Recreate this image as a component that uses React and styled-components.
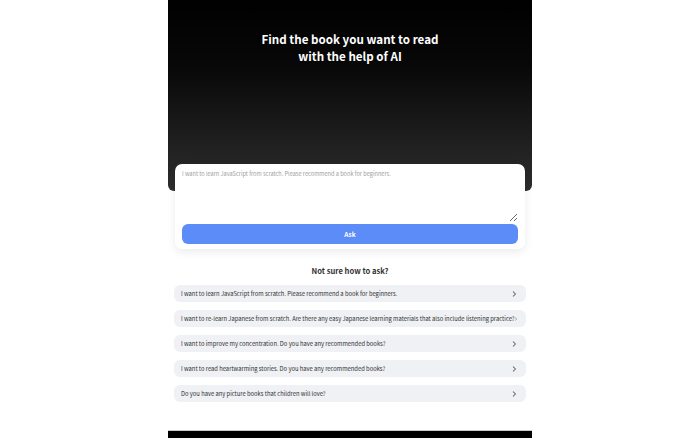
import React from "react";
import styled, { createGlobalStyle } from "styled-components";

const suggestions = [
  "I want to learn JavaScript from scratch. Please recommend a book for beginners.",
  "I want to re-learn Japanese from scratch. Are there any easy Japanese learning materials that also include listening practice?",
  "I want to improve my concentration. Do you have any recommended books?",
  "I want to read heartwarming stories. Do you have any recommended books?",
  "Do you have any picture books that children will love?",
];

const Chevron = () => (
  <svg width="5" height="6" viewBox="0 0 5 6" fill="none">
    <polyline points="1.2,0.8 3.6,3 1.2,5.2" stroke="#444" strokeWidth="1" strokeLinecap="round" strokeLinejoin="round" />
  </svg>
);

const App = () => {
  return (
    <>
      <GlobalStyle />
      <Page>
        <Hero>
          <Title>
            Find the book you want to read
            <br />
            with the help of AI
          </Title>
        </Hero>
        <AskCard>
          <Question placeholder="I want to learn JavaScript from scratch. Please recommend a book for beginners." />
          <AskButton>Ask</AskButton>
        </AskCard>
        <Hint>Not sure how to ask?</Hint>
        <SuggestionList>
          {suggestions.map((text) => (
            <Suggestion key={text}>
              <SuggestionText>{text}</SuggestionText>
              <Chevron />
            </Suggestion>
          ))}
        </SuggestionList>
        <Footer />
      </Page>
    </>
  );
};

const GlobalStyle = createGlobalStyle`
  body {
    margin: 0;
    background: #fff;
    font-family: "Noto Sans CJK JP", "Noto Sans", sans-serif;
  }
`;

const Page = styled.div`
  width: 364px;
  margin: 0 auto;
  display: flex;
  flex-direction: column;
  background: #fff;
`;

const Hero = styled.div`
  height: 191px;
  padding-top: 31px;
  box-sizing: border-box;
  background: linear-gradient(180deg, #000 0%, #080808 35%, #2e2e2e 100%);
  border-radius: 0 0 6px 6px;
`;

const Title = styled.h1`
  margin: 0;
  color: #fff;
  font-size: 11.6px;
  font-weight: 700;
  line-height: 17px;
  text-align: center;
`;

const AskCard = styled.div`
  margin: -27px 7px 0;
  padding: 4px 7px 5px;
  background: #fff;
  border-radius: 7px;
  box-shadow: 0 3px 10px rgba(0, 0, 0, 0.08);
  display: flex;
  flex-direction: column;
  gap: 2px;
  position: relative;
`;

const Question = styled.textarea`
  box-sizing: border-box;
  height: 54px;
  padding: 2px 0;
  border: none;
  outline: none;
  resize: vertical;
  font-family: inherit;
  font-size: 5.6px;
  color: #333;
  &::placeholder {
    color: #a0a0a0;
  }
`;

const AskButton = styled.button`
  height: 20px;
  border: none;
  border-radius: 6px;
  background: #5b8cf7;
  color: #fff;
  font-family: inherit;
  font-size: 6.5px;
  font-weight: 700;
`;

const Hint = styled.h2`
  margin: 16px 0 8px;
  font-size: 7.6px;
  font-weight: 700;
  color: #333;
  text-align: center;
  line-height: 12px;
`;

const SuggestionList = styled.div`
  display: flex;
  flex-direction: column;
  gap: 8px;
  padding: 0 6px;
`;

const Suggestion = styled.div`
  height: 17px;
  padding: 0 9px 0 7px;
  display: flex;
  align-items: center;
  justify-content: space-between;
  background: #f0f1f4;
  border-radius: 6px;
`;

const SuggestionText = styled.span`
  font-size: 5.8px;
  color: #2e2e2e;
  white-space: nowrap;
`;

const Footer = styled.div`
  margin-top: 28px;
  height: 7px;
  background: #000;
  border-top: 1px solid #ccc;
`;

export default App;
